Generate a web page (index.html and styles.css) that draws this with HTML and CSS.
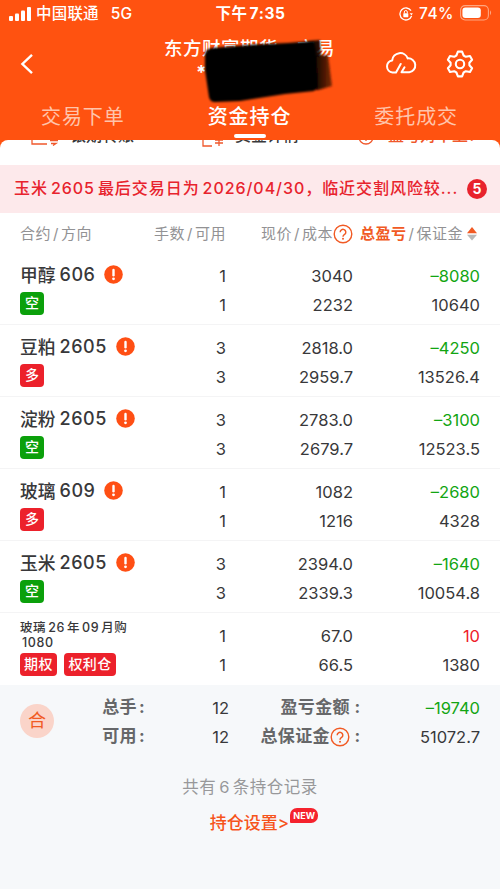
FILE: index.html
```html
<!DOCTYPE html>
<html lang="zh-CN">
<head>
<meta charset="utf-8">
<title>资金持仓</title>
<link rel="stylesheet" href="styles.css">
</head>
<body>
<header class="top">
  <div class="status">
    <div class="status-left">
      <svg width="23" height="14" viewBox="0 0 23 14" fill="#fff"><rect x="0" y="9" width="4" height="5" rx="1"/><rect x="6" y="6.5" width="4" height="7.5" rx="1"/><rect x="12" y="3.5" width="4" height="10.5" rx="1"/><rect x="18" y="0" width="4" height="14" rx="1"/></svg>
      <span class="carrier">中国联通</span><span class="net">5G</span>
    </div>
    <div class="clock"><span>下午</span>7:35</div>
    <div class="status-right">
      <svg width="14" height="14" viewBox="0 0 14 14" fill="none" stroke="#fff" stroke-width="1.3"><path d="M12 3.7A6 6 0 1 0 12.6 9"/><path d="M10.6 6.2h3.2L12.5 8.5z" fill="#fff" stroke="none"/><rect x="4.3" y="6.2" width="5" height="4" rx=".6" fill="#fff" stroke="none"/><path d="M5.3 6.4V5a1.5 1.5 0 0 1 3 0v1.4" stroke-width="1"/></svg>
      <span class="pct">74%</span>
      <svg width="32" height="16" viewBox="0 0 32 16"><rect x=".6" y=".6" width="27.8" height="14.4" rx="4.5" fill="none" stroke="#ffa680" stroke-width="1.1"/><rect x="2.4" y="2.5" width="18.4" height="10.6" rx="3" fill="#fff"/><path d="M30 5.3q2.2 2.5 0 5z" fill="#ffa680"/></svg>
    </div>
  </div>
  <div class="nav">
    <svg class="back" width="14" height="22" viewBox="0 0 14 22" fill="none" stroke="#fff" stroke-width="2.4"><path d="M12 1.8L2.4 11 12 20.2"/></svg>
    <div class="title"><div class="name">东方财富期货<span class="last">交易</span></div><div class="acct">*</div>
      <svg class="redact" width="136" height="72" viewBox="0 0 136 72"><defs><filter id="soft"><feGaussianBlur stdDeviation="1"/></filter><linearGradient id="fade" x1="0" x2="1" y1="0" y2="0"><stop offset="0" stop-color="#000"/><stop offset=".45" stop-color="#1c0802" stop-opacity=".95"/><stop offset="1" stop-color="#5a1c08" stop-opacity=".8"/></linearGradient></defs><g filter="url(#soft)"><path d="M108 20L128 19 132 50 118 54 108 54z" fill="url(#fade)"/><path d="M108 5L120 4 121 20 108 22z" fill="#000" fill-opacity=".85"/><path d="M5 18Q6 13 12 12L55 8.5 88 7 114 5 116 14 118 50 114 55 85 58 40 65 15 66Q10 66 9 61L5 34z" fill="#000"/></g></svg>
    </div>
    <svg class="cloud" width="34" height="26" viewBox="0 0 34 26" fill="none" stroke="#fff" stroke-width="2" stroke-linecap="round" stroke-linejoin="round"><path d="M16.7 14L12 22.5H8.5A6.1 6.1 0 0 1 8.2 10.4A8 8 0 0 1 23.7 8.4A7 7 0 0 1 25.3 22.3H17.5L20.5 17.3"/></svg>
    <svg class="gear" width="28" height="28" viewBox="0 0 28 28" fill="none" stroke="#fff" stroke-width="2.1" stroke-linejoin="round"><path d="M11.9 1.6h4.2l1.5 3.9 2.2 1.3 4.2-.8 2.1 3.7-2.7 3.1v2.4l2.7 3.1-2.1 3.7-4.2-.8-2.2 1.3-1.5 3.9h-4.2l-1.5-3.9-2.2-1.3-4.2.8-2.1-3.7 2.7-3.1v-2.4L1.900 9.700 4 6l4.200.8 2.200-1.300z"/><circle cx="14" cy="14" r="4.2"/></svg>
  </div>
  <nav class="tabs"><div>交易下单</div><div class="on">资金持仓</div><div>委托成交</div></nav>
</header>
<main class="panel">
  <div class="entries">
    <div class="entry e1"><svg width="28" height="20" viewBox="0 0 28 20" fill="none" stroke="#f0582c" stroke-width="1.3"><path d="M1 1v17h15M27 14.500H19M20 17.500h5l-3 2"/></svg><span>银期转账</span></div>
    <div class="entry e2"><svg width="22" height="22" viewBox="0 0 22 22" fill="none" stroke="#f0582c" stroke-width="1.3"><path d="M1 1v20h9M13 15h8M13 18h8M17 12v9M14 10l3 3 3-3"/></svg><span>资金详情</span></div>
    <div class="entry e3"><svg width="16" height="16" viewBox="0 0 16 16" fill="none" stroke="#f0582c" stroke-width="1.3"><circle cx="8" cy="8" r="7"/><path d="M8 9v3"/></svg><span>盈亏对不上?</span></div>
  </div>
  <div class="notice"><p>玉米<i></i>2605<i></i>最后交易日为<i></i>2026/04/30，临近交割风险较...</p><b>5</b></div>
  <div class="thead">
    <div class="c1">合约<em>/</em>方向</div><div class="c2">手数<em>/</em>可用</div>
    <div class="c3">现价<em>/</em>成本<svg class="help" width="20" height="20" viewBox="0 0 20 20"><use href="#q"/></svg></div>
    <div class="c4"><strong>总盈亏</strong><em>/</em>保证金<svg class="sort" width="10" height="14" viewBox="0 0 10 14"><path d="M5 0l5 6.3H0z" fill="#f15a24"/><path d="M0 7.700h10L5 13.500z" fill="#b9b9b9"/></svg></div>
  </div>
  <div class="row"><div class="c1"><div class="nm">甲醇<span>606</span><svg class="warn" width="19" height="19" viewBox="0 0 19 19"><use href="#w"/></svg></div><b class="tag short">空</b></div><div class="c2">1<br>1</div><div class="c3">3040<br>2232</div><div class="c4"><span class="dn">–8080</span><br>10640</div></div>
  <div class="row"><div class="c1"><div class="nm">豆粕<span>2605</span><svg class="warn" width="19" height="19" viewBox="0 0 19 19"><use href="#w"/></svg></div><b class="tag">多</b></div><div class="c2">3<br>3</div><div class="c3">2818.0<br>2959.7</div><div class="c4"><span class="dn">–4250</span><br>13526.4</div></div>
  <div class="row"><div class="c1"><div class="nm">淀粉<span>2605</span><svg class="warn" width="19" height="19" viewBox="0 0 19 19"><use href="#w"/></svg></div><b class="tag short">空</b></div><div class="c2">3<br>3</div><div class="c3">2783.0<br>2679.7</div><div class="c4"><span class="dn">–3100</span><br>12523.5</div></div>
  <div class="row"><div class="c1"><div class="nm">玻璃<span>609</span><svg class="warn" width="19" height="19" viewBox="0 0 19 19"><use href="#w"/></svg></div><b class="tag">多</b></div><div class="c2">1<br>1</div><div class="c3">1082<br>1216</div><div class="c4"><span class="dn">–2680</span><br>4328</div></div>
  <div class="row"><div class="c1"><div class="nm">玉米<span>2605</span><svg class="warn" width="19" height="19" viewBox="0 0 19 19"><use href="#w"/></svg></div><b class="tag short">空</b></div><div class="c2">3<br>3</div><div class="c3">2394.0<br>2339.3</div><div class="c4"><span class="dn">–1640</span><br>10054.8</div></div>
  <div class="row option"><div class="c1"><div class="opt">玻璃<i></i>26<i></i>年<i></i>09<i></i>月购</div><div class="opt strike">1080</div><div class="tags"><b class="tag">期权</b><b class="tag">权利仓</b></div></div><div class="c2">1<br>1</div><div class="c3">67.0<br>66.5</div><div class="c4"><span class="up">10</span><br>1380</div></div>
</main>
<footer class="foot">
  <div class="sum">
    <div class="badge">合</div>
    <div class="lab s1"><div>总手<u>:</u></div><div>可用<u>:</u></div></div>
    <div class="num s2">12<br>12</div>
    <div class="lab s3"><div>盈亏金额<u>:</u></div><div>总保证金<svg class="help" width="20" height="20" viewBox="0 0 20 20"><use href="#q"/></svg><u>:</u></div></div>
    <div class="num s4"><span class="dn">–19740</span><br>51072.7</div>
  </div>
  <div class="count">共有<i></i>6<i></i>条持仓记录</div>
  <div class="setting"><span>持仓设置&gt;</span><b>NEW</b></div>
</footer>
<svg class="defs" width="0" height="0"><defs>
  <g id="q" fill="none" stroke="#f15a24"><circle cx="10" cy="10" r="8.8" stroke-width="1.4"/><path d="M7.200 8.200a2.800 2.800 0 1 1 4.600 2.100c-1.100.8-1.800 1.200-1.800 2.400" stroke-width="1.5"/><circle cx="10" cy="14.7" r="1" fill="#f15a24" stroke="none"/></g>
  <g id="w"><circle cx="9.5" cy="9.5" r="9.3" fill="#ff4f14"/><path d="M9.500 5v5.200" stroke="#fff" stroke-width="2.4" stroke-linecap="round"/><circle cx="9.5" cy="13.8" r="1.4" fill="#fff"/></g>
</defs></svg>
</body>
</html>
```

FILE: styles.css
```css
* { box-sizing: border-box; }
body { margin: 0; width: 500px; height: 889px; overflow: hidden; background: #f6f8fa; color: #38383a; font-family: Inter, "Noto Sans CJK SC", sans-serif; }
svg { display: block; flex: none; }
i { display: inline-block; width: 3px; }
em, u { font-style: normal; text-decoration: none; }
.defs { position: absolute; }

.top { height: 148px; background: #ff5210; color: #fff; }
.status { height: 28px; display: grid; grid-template-columns: 1fr 1fr 1fr; align-items: center; padding: 0 8px 0 9px; font-size: 15.5px; font-weight: 500; line-height: 28px; }
.status-left, .status-right { display: flex; align-items: center; }
.status-left svg { margin-top: -1px; }
.carrier { margin-left: 4px; letter-spacing: .2px; }
.net { margin-left: 12px; letter-spacing: .2px; }
.clock { text-align: center; font-weight: 700; white-space: nowrap; letter-spacing: .6px; }
.clock span { margin-right: 2px; }
.status-right { justify-content: flex-end; }
.pct { margin: 0 6px 0 6px; letter-spacing: .5px; }
.status-right svg:last-child { margin-top: -3px; }

.nav { height: 69px; display: flex; }
.back { margin: 25px 0 0 20px; }
.title { position: relative; width: 172px; margin-left: 129px; padding-top: 6px; }
.name { font-size: 18.5px; line-height: 27px; letter-spacing: .5px; font-weight: 500; white-space: nowrap; padding: 1px 0 0 1px; }
.last { margin-left: 19px; }
.acct { font-size: 19px; line-height: 22px; margin-left: 33px; font-weight: 700; }
.redact { position: absolute; left: 37px; top: 8px; }
.cloud { margin: 22px 0 0 49px; }
.gear { margin: 22px 0 0 28px; }
.tabs { height: 51px; display: grid; grid-template-columns: repeat(3, 1fr); text-align: center; font-size: 20px; letter-spacing: .9px; line-height: 40px; color: #ffc4ab; }
.tabs > div { margin-left: -1px; }
.on { color: #fff; font-weight: 500; }
.on::after { content: ""; display: block; width: 32px; height: 4px; margin: -3px auto 0; position: relative; left: 1px; border-radius: 2px; background: #fff; }

.panel { position: relative; margin-top: -8px; background: #fff; border-radius: 8px 8px 0 0; overflow: hidden; }
.entries { height: 25px; overflow: hidden; display: flex; }
.entry { display: flex; align-items: flex-end; height: 24px; margin-top: -17px; font-size: 16px; line-height: 24px; font-weight: 500; white-space: nowrap; }
.e1 { margin-left: 31px; width: 171px; }
.e2 { width: 156px; }
.e3 { color: #f0582c; }
.e1 span { margin-left: 11px; }
.e2 span { margin-left: 11px; }
.e3 span { margin-left: 14px; }
.e1 svg { margin-bottom: 1px; }
.e2 svg { margin-bottom: 0; }
.e3 svg { margin-bottom: 2px; }

.notice { height: 48px; padding: 0 13px 0 14px; background: #fde9eb; color: #e8232d; display: flex; align-items: center; justify-content: space-between; }
.notice p { margin: 0; font-size: 16px; font-weight: 500; letter-spacing: .95px; white-space: nowrap; line-height: 44px; padding-bottom: 3px; }
.notice b { width: 20px; height: 20px; border-radius: 50%; background: #e8232d; color: #fff; text-align: center; font-size: 14px; line-height: 20px; }

.thead, .row { display: grid; grid-template-columns: 130px 76px 127px 127px; padding: 0 20px; }
.thead { height: 40px; padding-top: 7px; font-size: 15px; line-height: 28px; color: #929294; letter-spacing: .5px; white-space: nowrap; }
.thead em { margin: 0 2px; }
.thead .c3, .thead .c4 { display: flex; align-items: center; justify-content: flex-end; height: 28px; }
.thead .c4 { padding-right: 3px; }
.thead .help { margin: 0; }
.thead strong { font-weight: 700; color: #f15a24; }
.sort { margin-left: 4px; }
.c2, .c3, .c4 { text-align: right; }
.row { height: 72px; border-bottom: 1px solid #f4f4f5; }
.row .c2, .row .c3, .row .c4, .num { font-size: 16.5px; line-height: 29.4px; font-weight: 400; padding-top: 9px; }
.dn { color: #12a512; }
.up { color: #ee2029; }
.nm { display: flex; align-items: center; height: 24px; margin-top: 9px; font-size: 17.8px; font-weight: 500; }
.nm span { margin-left: 4px; font-size: 18px; letter-spacing: .5px; }
.warn { margin-left: 9px; }
.tag { display: block; width: 24px; height: 23px; margin-top: 6px; border-radius: 4px; background: #ec212b; color: #fff; text-align: center; font-size: 14px; line-height: 22px; font-weight: 500; }
.short { background: #0ba00b; }
.option { border: 0; }
.opt { height: 15px; font-size: 12.5px; line-height: 15px; font-weight: 500; letter-spacing: .6px; white-space: nowrap; }
.opt:first-child { margin-top: 7px; }
.opt i { width: 2px; }
.strike { margin-left: 2px; }
.tags { display: flex; gap: 7px; }
.tags .tag { margin-top: 3px; width: 37px; letter-spacing: .4px; }
.tags .tag + .tag { width: 52px; }

.foot { background: #f6f8fa; height: 204px; }
.sum { display: grid; grid-template-columns: 34px 92px 83px 134px 117px; padding: 0 20px; height: 84px; }
.badge { width: 34px; height: 34px; margin-top: 19px; border-radius: 50%; background: #fad4c9; color: #f15a24; font-size: 18px; line-height: 33px; text-align: center; }
.lab { font-size: 17px; line-height: 29.4px; font-weight: 700; color: #666769; padding-top: 8px; letter-spacing: .4px; }
.lab > div { display: flex; align-items: center; justify-content: flex-end; height: 29.4px; }
.lab u { width: 8px; margin-left: 1px; text-align: center; }
.s3 u { width: 11px; margin-left: 2px; }
.num { text-align: right; }
.count { text-align: center; color: #98989a; font-size: 16.5px; line-height: 28px; margin-top: 4px; letter-spacing: .5px; }
.setting { display: flex; justify-content: center; margin-left: 28px; margin-top: 7px; color: #f6541c; font-size: 17px; line-height: 30px; font-weight: 500; }
.setting b { width: 28px; height: 15px; margin-left: 1px; border-radius: 7px 7px 7px 1px; background: #f5222d; color: #fff; font-size: 9px; line-height: 15px; text-align: center; font-weight: 700; }
```
